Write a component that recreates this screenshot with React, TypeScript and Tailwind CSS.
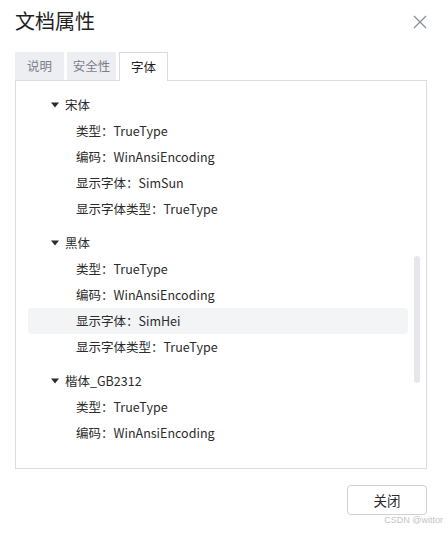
import React from "react";

type FontGroup = {
  name: string;
  props: string[];
};

const groups: FontGroup[] = [
  {
    name: "宋体",
    props: ["类型：TrueType", "编码：WinAnsiEncoding", "显示字体：SimSun", "显示字体类型：TrueType"],
  },
  {
    name: "黑体",
    props: ["类型：TrueType", "编码：WinAnsiEncoding", "显示字体：SimHei", "显示字体类型：TrueType"],
  },
  {
    name: "楷体_GB2312",
    props: ["类型：TrueType", "编码：WinAnsiEncoding"],
  },
];

const font = { fontFamily: '"Noto Sans CJK SC", "Noto Sans", sans-serif' };

function Caret() {
  return (
    <svg width="8" height="6" viewBox="0 0 8 6" className="mr-[6px] shrink-0">
      <path d="M0 0.5 H8 L4 5.5 Z" fill="#2b2b2b" />
    </svg>
  );
}

export default function App() {
  const tabs = ["说明", "安全性", "字体"];
  return (
    <div
      className="relative h-[533px] w-[448px] overflow-hidden bg-white pl-[15px] pr-[21px] text-[#2b2b2b]"
      style={font}
    >
      <div className="flex h-[40px] items-center justify-between pt-[1px]">
        <h1 className="text-[20px] leading-none text-[#1f1f1f]">文档属性</h1>
        <svg width="16" height="16" viewBox="0 0 16 16" className="mr-[-1px] mt-[2px]">
          <path d="M2 2 L14 14 M14 2 L2 14" stroke="#8b8f99" strokeWidth="1.3" />
        </svg>
      </div>

      <div className="mt-[12px] flex gap-[3px]">
        {tabs.map((t, i) =>
          i === 2 ? (
            <div
              key={t}
              className="relative z-10 mb-[-1px] flex h-[29px] w-[49px] items-center justify-center border border-b-0 border-[#d9dbe0] bg-white text-[12.5px] text-[#1f1f1f]"
            >
              {t}
            </div>
          ) : (
            <div
              key={t}
              className="flex h-[28px] w-[49px] items-center justify-center bg-[#eceef2] text-[12.5px] text-[#7a7f8a]"
            >
              {t}
            </div>
          )
        )}
      </div>

      <div className="flex h-[389px] border border-[#dcdde1]">
        <div className="flex-1 overflow-hidden pl-[12px] pr-[6px] pt-[11px]">
          {groups.map((g) => (
            <div key={g.name} className="mb-[8px]">
              <div className="flex h-[26px] items-center pl-[23px] text-[12.5px]">
                <Caret />
                <span>{g.name}</span>
              </div>
              {g.props.map((p) => (
                <div
                  key={p}
                  className={`flex h-[26px] items-center rounded-[4px] pl-[48px] text-[12.5px] ${
                    p === "显示字体：SimHei" ? "bg-[#f3f4f6]" : ""
                  }`}
                >
                  {p}
                </div>
              ))}
            </div>
          ))}
        </div>
        <div className="mr-[6px] w-[6px] pt-[175px]">
          <div className="h-[127px] rounded-full bg-[#e6e7ea]" />
        </div>
      </div>

      <div className="flex justify-end pt-[16px]">
        <button className="h-[30px] w-[80px] rounded-[4px] border border-[#cfcfd6] bg-white text-[13.5px] text-[#2b2b2b]">
          关闭
        </button>
      </div>

      <span
        className="absolute bottom-[6px] right-[5px] text-[9px] text-[#c4c4c4]"
        style={{ fontFamily: '"Liberation Sans", Arial, sans-serif' }}
      >
        CSDN @wittor
      </span>
    </div>
  );
}
